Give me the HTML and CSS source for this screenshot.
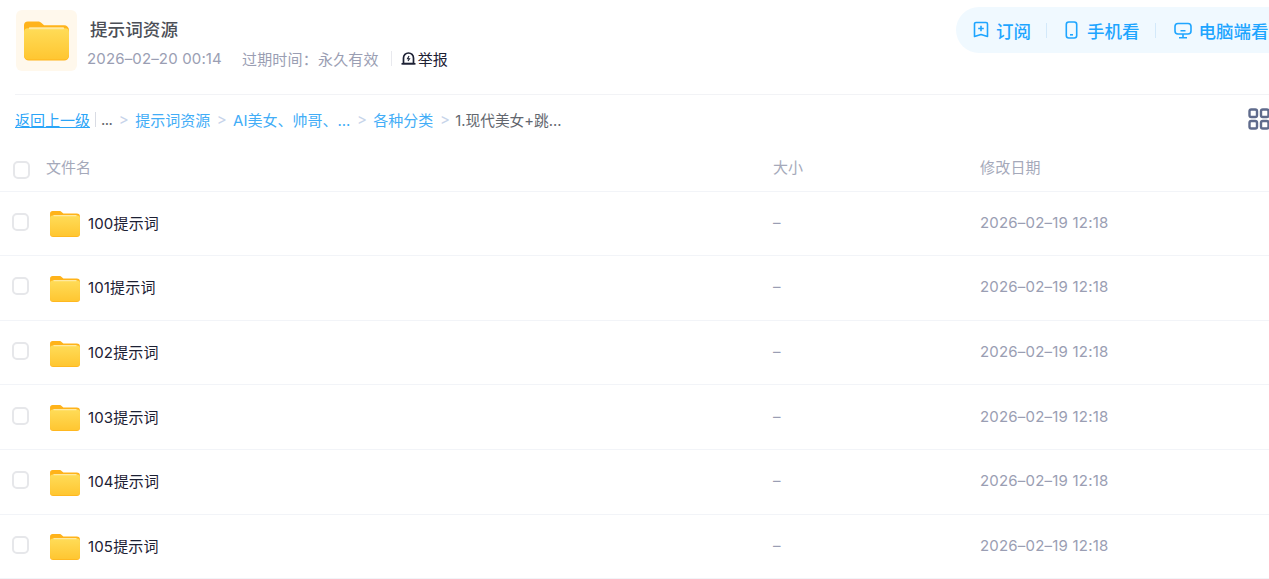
FILE: index.html
```html
<!DOCTYPE html>
<html lang="zh-CN">
<head>
    <meta charset="UTF-8">
    <meta name="viewport" content="width=device-width, initial-scale=1.0">
    <title>提示词资源</title>
    <link rel="stylesheet" href="styles.css">
</head>
<body>
    <svg class="defs" width="0" height="0">
        <defs>
            <linearGradient id="folderFront" x1="0" y1="0" x2="0" y2="1">
                <stop offset="0" stop-color="#ffdc58"/>
                <stop offset="1" stop-color="#ffc631"/>
            </linearGradient>
            <symbol id="folder" viewBox="0 0 46 40">
                <path d="M4 0h10c2 0 3 .6 4.200 1.800L20.500 4H41a5 5 0 0 1 5 5v26a5 5 0 0 1-5 5H5a5 5 0 0 1-5-5V4a4 4 0 0 1 4-4z" fill="#ffb31a"/>
                <path d="M0 11a4 4 0 0 1 4-4h38a4 4 0 0 1 4 4v23a5 5 0 0 1-5 5H5a5 5 0 0 1-5-5z" fill="url(#folderFront)"/>
                <rect x="5" y="6" width="36" height="2" rx="1" fill="#ffe9a0"/>
            </symbol>
        </defs>
    </svg>

    <header class="top">
        <div class="cover">
            <svg class="cover-folder"><use href="#folder"/></svg>
        </div>
        <div class="info">
            <h1>提示词资源</h1>
            <div class="meta">
                <span class="meta-date">2026–02–20 00:14</span>
                <span class="meta-expire">过期时间：永久有效</span>
                <span class="meta-line"></span>
                <a class="report">
                    <svg width="15" height="15" viewBox="0 0 15 15" fill="none" stroke="#1c2033" stroke-width="1.700">
                        <path d="M2.500 12.500V7a5 5 0 0 1 10 0v5.500z"/>
                        <path d="M.5 12.800h14"/>
                        <path d="M8 5L6.500 7.800h2L7 10" stroke-width="1.100"/>
                    </svg>
                    举报
                </a>
            </div>
        </div>
        <div class="actions">
            <a class="action">
                <svg width="16" height="18" viewBox="0 0 16 18" fill="none" stroke="#1ea5ff" stroke-width="1.600" stroke-linejoin="round">
                    <path d="M3 1.500h10a1.500 1.500 0 0 1 1.500 1.500v12.500L8 13.500 1.500 15.500V3A1.500 1.500 0 0 1 3 1.500z"/>
                    <path d="M5.200 7.500h5.600M8 4.700v5.600"/>
                </svg>
                订阅
            </a>
            <span class="action-line"></span>
            <a class="action action-phone">
                <svg width="13" height="18" viewBox="0 0 13 18" fill="none" stroke="#1ea5ff" stroke-width="1.600">
                    <rect x="1.300" y="1" width="10.400" height="16" rx="2.500"/>
                    <path d="M5 13.800h3"/>
                </svg>
                手机看
            </a>
            <span class="action-line"></span>
            <a class="action">
                <svg width="18" height="17" viewBox="0 0 18 17" fill="none" stroke="#1ea5ff" stroke-width="1.600">
                    <rect x="1" y="1.500" width="16" height="10.500" rx="3"/>
                    <path d="M9 12v3.500M5 15.800h8M6.500 8.800h5"/>
                </svg>
                电脑端看
            </a>
        </div>
    </header>

    <nav class="crumbs">
        <a class="back">返回上一级</a>
        <span class="crumb-line"></span>
        <span class="crumb-dots">...</span>
        <span class="sep">&gt;</span>
        <a class="crumb">提示词资源</a>
        <span class="sep">&gt;</span>
        <a class="crumb">AI美女、帅哥、...</a>
        <span class="sep">&gt;</span>
        <a class="crumb">各种分类</a>
        <span class="sep">&gt;</span>
        <span class="crumb-current">1.现代美女+跳...</span>
        <svg class="grid-toggle" width="22" height="22" viewBox="0 0 22 22" fill="none" stroke="#5f6b8c" stroke-width="2.400">
            <rect x="1.500" y="1.500" width="7.500" height="7.500" rx="1.800"/>
            <rect x="13" y="1.500" width="7.500" height="7.500" rx="1.800"/>
            <rect x="1.500" y="13" width="7.500" height="7.500" rx="1.800"/>
            <rect x="13" y="13" width="7.500" height="7.500" rx="1.800"/>
        </svg>
    </nav>

    <div class="list-head">
        <span class="check check-head"></span>
        <span class="col-name">文件名</span>
        <span class="col-size">大小</span>
        <span class="col-date">修改日期</span>
    </div>

    <div class="list">
        <div class="row">
            <span class="check"></span>
            <svg class="row-folder"><use href="#folder"/></svg>
            <span class="row-name">100提示词</span>
            <span class="col-size">–</span>
            <span class="col-date">2026–02–19 12:18</span>
        </div>
        <div class="row">
            <span class="check"></span>
            <svg class="row-folder"><use href="#folder"/></svg>
            <span class="row-name">101提示词</span>
            <span class="col-size">–</span>
            <span class="col-date">2026–02–19 12:18</span>
        </div>
        <div class="row">
            <span class="check"></span>
            <svg class="row-folder"><use href="#folder"/></svg>
            <span class="row-name">102提示词</span>
            <span class="col-size">–</span>
            <span class="col-date">2026–02–19 12:18</span>
        </div>
        <div class="row">
            <span class="check"></span>
            <svg class="row-folder"><use href="#folder"/></svg>
            <span class="row-name">103提示词</span>
            <span class="col-size">–</span>
            <span class="col-date">2026–02–19 12:18</span>
        </div>
        <div class="row">
            <span class="check"></span>
            <svg class="row-folder"><use href="#folder"/></svg>
            <span class="row-name">104提示词</span>
            <span class="col-size">–</span>
            <span class="col-date">2026–02–19 12:18</span>
        </div>
        <div class="row">
            <span class="check"></span>
            <svg class="row-folder"><use href="#folder"/></svg>
            <span class="row-name">105提示词</span>
            <span class="col-size">–</span>
            <span class="col-date">2026–02–19 12:18</span>
        </div>
    </div>
</body>
</html>
```

FILE: styles.css
```css
html, body {
    height: 579px;
    overflow: hidden;
}
body {
    margin: 0;
    padding: 0;
    background-color: #fff;
    font-family: Inter, "Noto Sans CJK SC", sans-serif;
    font-size: 15px;
    color: #1c2033;
}
.defs {
    position: absolute;
}
.top {
    display: flex;
    align-items: flex-start;
    height: 94px;
    margin-left: 15px;
    border-bottom: 1px solid #f2f3f6;
}
.cover {
    display: flex;
    align-items: center;
    justify-content: center;
    width: 61px;
    height: 61px;
    margin: 10px 0 0 1px;
    background-color: #fff8ec;
    border-radius: 6px;
}
.cover-folder {
    width: 45px;
    height: 40px;
}
.info {
    margin-left: 10px;
    flex: 1;
}
.info h1 {
    margin: 17px 0 0 3px;
    font-size: 17.600px;
    line-height: 26px;
    font-weight: 500;
    color: #4c4f57;
}
.meta {
    display: flex;
    align-items: center;
    margin-top: 5px;
    height: 20px;
    color: #9a9eb3;
    font-size: 15px;
}
.meta-date {
    letter-spacing: .15px;
}
.meta-expire {
    margin-left: 20px;
    letter-spacing: .2px;
}
.meta-line {
    width: 1px;
    height: 15px;
    margin: 0 9px 0 12px;
    background-color: #e8e9ee;
}
.report {
    display: flex;
    align-items: center;
    gap: 2px;
    color: #1c2033;
}
.actions {
    display: flex;
    align-items: center;
    height: 46px;
    margin-top: 7px;
    padding-left: 17px;
    width: 313px;
    box-sizing: border-box;
    background-color: #f0f9ff;
    border-radius: 23px 0 0 23px;
    white-space: nowrap;
    flex-shrink: 0;
}
.action {
    display: flex;
    align-items: center;
    gap: 7px;
    color: #1ea5ff;
    font-size: 17.500px;
    font-weight: 500;
}
.action-phone {
    gap: 9px;
}
.action-line {
    width: 1px;
    height: 15px;
    margin: 0 18px 0 15px;
    background-color: #d3e9fa;
    flex-shrink: 0;
}
.crumbs {
    display: flex;
    align-items: center;
    height: 48px;
    padding-bottom: 2px;
    margin-left: 15px;
    font-size: 15px;
}
.back {
    color: #2aa5f8;
    text-decoration: underline;
}
.crumb-line {
    width: 1px;
    height: 15px;
    margin: 0 5px;
    background-color: #d9dce4;
}
.crumb-dots,
.crumb-current {
    color: #62666e;
}
.crumb-dots {
    letter-spacing: -.6px;
}
.crumb-current {
    font-size: 14.700px;
    margin-left: -1px;
}
.crumb {
    color: #42adf7;
}
.sep {
    margin: 0 6.500px;
    color: #c6d4ea;
}
.grid-toggle {
    margin-left: auto;
    margin-right: -1px;
}
.list-head,
.row {
    position: relative;
    display: flex;
    align-items: center;
    border-bottom: 1px solid #f2f4f8;
    box-sizing: border-box;
}
.list-head {
    height: 46.600px;
    padding-bottom: 2px;
    color: #a5a9ba;
}
.row {
    height: 64.600px;
    padding-bottom: 2px;
}
.check {
    width: 17px;
    height: 18px;
    margin-left: 12px;
    border: 2px solid #e6e7ea;
    border-radius: 5px;
    box-sizing: border-box;
    flex-shrink: 0;
    margin-top: -1px;
}
.check-head {
    margin-left: 13px;
    margin-top: 6px;
}
.col-name {
    margin-left: 16px;
}
.row-folder {
    width: 30px;
    height: 26px;
    margin: 4px 0 0 21px;
    flex-shrink: 0;
}
.row-name {
    margin-left: 8px;
    letter-spacing: .15px;
    color: #1c2033;
}
.col-size {
    position: absolute;
    left: 773px;
    color: #9a9eb3;
}
.col-date {
    position: absolute;
    left: 980px;
    letter-spacing: .2px;
    color: #9a9eb3;
}
.list-head .col-size,
.list-head .col-date {
    color: #a5a9ba;
}
```
